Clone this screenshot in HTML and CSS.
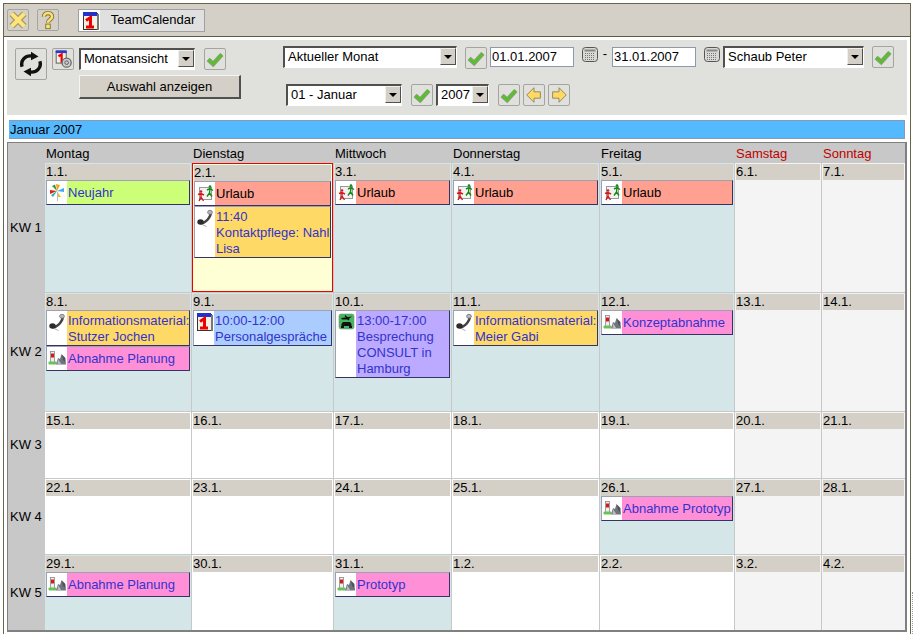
FILE: index.html
```html
<!DOCTYPE html>
<html lang="de">
<head>
<meta charset="utf-8">
<title>TeamCalendar</title>
<link rel="stylesheet" href="styles.css">
</head>
<body>
<svg class="defs" width="0" height="0" aria-hidden="true">
  <symbol id="i-x" viewBox="0 0 22 22">
    <path d="M4 4L18 18M18 4L4 18" fill="none" stroke="#a39a62" stroke-width="7"/>
    <path d="M4 4L18 18M18 4L4 18" fill="none" stroke="#ffe47c" stroke-width="4.600"/>
  </symbol>
  <symbol id="i-q" viewBox="0 0 22 22">
    <path d="M6.500 7.500C6.500 2 15.500 2 15.500 7.500C15.500 10.500 11 10.500 11 14" fill="none" stroke="#7c7444" stroke-width="4.800"/>
    <path d="M6.500 7.500C6.500 2 15.500 2 15.500 7.500C15.500 10.500 11 10.500 11 14" fill="none" stroke="#ffdf70" stroke-width="2.800"/>
    <rect x="8.500" y="15.500" width="5" height="5" fill="#ffdf70" stroke="#7c7444"/>
  </symbol>
  <symbol id="i-cal" viewBox="0 0 20 20">
    <rect x="3.500" y="2.500" width="14" height="16" fill="#f4f0e4" stroke="#333"/>
    <rect x="17" y="3" width="2" height="16" fill="#777"/>
    <rect x="3" y="1" width="14" height="4" fill="#2233cc"/>
    <path d="M6 9.500L10.500 6.500V16.500M6 16H14M10.500 7V16" fill="none" stroke="#ee0000" stroke-width="3"/>
  </symbol>
  <symbol id="i-ref" viewBox="0 0 32 32">
    <path d="M6.500 19C4.500 12 10 6.500 17 7.500" fill="none" stroke="#111" stroke-width="3.600"/>
    <path d="M16 3L24 8L16 12Z" fill="#111"/>
    <path d="M25.500 13C27.500 20 22 25.500 15 24.500" fill="none" stroke="#111" stroke-width="3.600"/>
    <path d="M16 29L8 24L16 20Z" fill="#111"/>
  </symbol>
  <symbol id="i-calc" viewBox="0 0 22 22">
    <rect x="3.500" y="2.500" width="11" height="13" fill="#f4f0e4" stroke="#555"/>
    <rect x="3" y="1.500" width="12" height="3" fill="#2a3acc"/>
    <path d="M6 8L9.500 6V15" fill="none" stroke="#e00" stroke-width="2.400"/>
    <circle cx="15" cy="15" r="5" fill="#ccc" stroke="#666" stroke-width="1.400"/>
    <circle cx="15" cy="15" r="2" fill="none" stroke="#555"/>
  </symbol>
  <symbol id="i-ok" viewBox="0 0 22 22">
    <path d="M3.500 11.500L9 16.500L18.500 6" fill="none" stroke="#8e9a80" stroke-width="5"/>
    <path d="M3.500 11.500L9 16.500L18.500 6" fill="none" stroke="#58c02a" stroke-width="3"/>
  </symbol>
  <symbol id="i-left" viewBox="0 0 22 22">
    <path d="M3 11L11 3V7.500H18V14.500H11V19Z" fill="#ffd964" stroke="#8a8258"/>
  </symbol>
  <symbol id="i-right" viewBox="0 0 22 22">
    <path d="M19 11L11 3V7.500H4V14.500H11V19Z" fill="#ffd964" stroke="#8a8258"/>
  </symbol>
  <symbol id="i-kb" viewBox="0 0 16 16">
    <rect x="0.500" y="0.500" width="15" height="14" rx="3" fill="#d8d8d4" stroke="#555"/>
    <rect x="2.500" y="2.500" width="11" height="2" fill="#888"/>
    <path d="M3 6.500H13M3 8.500H13M3 10.500H13M3 12.500H13" stroke="#777" stroke-dasharray="1 1"/>
  </symbol>
  <symbol id="i-run" viewBox="0 0 20 20">
    <rect x="4.500" y="4.500" width="12" height="12" fill="#f2f2f2" stroke="#999"/>
    <circle cx="6" cy="8.500" r="1.300" fill="#d81818"/>
    <path d="M3 11.500L6 10.500L9 12M6 10.500L6 14L4 18M6 14L8.500 18" fill="none" stroke="#d81818" stroke-width="1.400"/>
    <circle cx="15" cy="3.500" r="1.300" fill="#128a12"/>
    <path d="M12 7L15 5.500L18 7.500M15 5.500L14.500 10L12 13.500M14.500 10L17 13.500" fill="none" stroke="#128a12" stroke-width="1.400"/>
  </symbol>
  <symbol id="i-tel" viewBox="0 0 20 20">
    <path d="M14 4.500C15.500 4.500 16 6 15 8C13.500 11 11.500 13.500 8 15C6.500 15.500 5.500 15 5 14" fill="none" stroke="#444" stroke-width="2.600"/>
    <ellipse cx="15" cy="4.300" rx="2.400" ry="2" fill="#b8b8b8" stroke="#666" stroke-width="0.700"/>
    <ellipse cx="5.500" cy="14" rx="3.200" ry="2.700" fill="#2c2c2c"/>
    <path d="M8 17L11.500 18.500" stroke="#b0b0b0"/>
  </symbol>
  <symbol id="i-star" viewBox="0 0 20 20">
    <path d="M10 9L9 2L13 3Z" fill="#f4a020"/>
    <path d="M10 9L17 6L17 10Z" fill="#44aaee"/>
    <path d="M10 9L14 15L10 15Z" fill="#f0c020"/>
    <path d="M10 9L3 12L3 8Z" fill="#e02020"/>
    <path d="M10 9L5 4L8 2.500Z" fill="#30a030"/>
    <path d="M10 9L6 15L4 13Z" fill="#30b0a0"/>
    <path d="M10.500 10V19" stroke="#bbb"/>
  </symbol>
  <symbol id="i-mile" viewBox="0 0 20 20">
    <rect x="3.500" y="3.500" width="4" height="11" fill="#eee" stroke="#888" stroke-width="0.800"/>
    <rect x="4" y="5.500" width="3" height="4" fill="#d81818"/>
    <rect x="1.500" y="13.500" width="8" height="3" rx="1" fill="#6cc058"/>
    <path d="M9 16.500L11 10L13 11L14.500 6L18.500 10L19 16.500Z" fill="#70747c"/>
    <path d="M11 11L14.500 16.500H10.500Z" fill="#b8bcc2"/>
    <path d="M15 7L16 12L18 14V10Z" fill="#50545c"/>
  </symbol>
  <symbol id="i-trip" viewBox="0 0 20 20">
    <rect x="3" y="2" width="15" height="15" rx="2" fill="#44b860" stroke="#888" stroke-width="0.600"/>
    <path d="M5 6L16 4.500L12 7.500H6Z" fill="#111"/>
    <path d="M9 3.500L13 8" stroke="#111" stroke-width="1.200"/>
    <path d="M5.500 12L7 10H14L15.500 12V14H5.500Z" fill="#111"/>
    <rect x="5" y="14" width="3" height="2" fill="#111"/>
    <rect x="13" y="14" width="3" height="2" fill="#111"/>
  </symbol>
</svg>

<div class="frame">
  <header class="toolbar">
    <span class="ibtn"><svg class="ic22"><use href="#i-x"/></svg></span>
    <span class="ibtn"><svg class="ic22"><use href="#i-q"/></svg></span>
    <div class="tab">
      <span class="tab-icon"><svg class="ic20"><use href="#i-cal"/></svg></span>
      <span class="tab-label">TeamCalendar</span>
    </div>
  </header>

  <section class="panel">
    <div class="group-left">
      <span class="ibtn big"><svg class="ic32"><use href="#i-ref"/></svg></span>
      <span class="ibtn"><svg class="ic22"><use href="#i-calc"/></svg></span>
      <div class="view-col">
        <div class="view-row">
          <div class="sel w-view"><span class="sel-text">Monatsansicht</span><span class="sel-arrow"></span></div>
          <span class="ibtn"><svg class="ic22"><use href="#i-ok"/></svg></span>
        </div>
        <button class="show-btn" type="button">Auswahl anzeigen</button>
      </div>
    </div>
    <div class="group-right">
      <div class="range-row">
        <div class="sel w-range"><span class="sel-text">Aktueller Monat</span><span class="sel-arrow"></span></div>
        <span class="ibtn ok-range"><svg class="ic22"><use href="#i-ok"/></svg></span>
        <span class="date-input">01.01.2007</span>
        <svg class="kb"><use href="#i-kb"/></svg>
        <span class="dash">-</span>
        <span class="date-input">31.01.2007</span>
        <svg class="kb"><use href="#i-kb"/></svg>
        <div class="sel w-person"><span class="sel-text">Schaub Peter</span><span class="sel-arrow"></span></div>
        <span class="ibtn ok-person"><svg class="ic22"><use href="#i-ok"/></svg></span>
      </div>
      <div class="month-row">
        <div class="sel w-month"><span class="sel-text">01 - Januar</span><span class="sel-arrow"></span></div>
        <span class="ibtn ok-month"><svg class="ic22"><use href="#i-ok"/></svg></span>
        <div class="sel w-year"><span class="sel-text">2007</span><span class="sel-arrow"></span></div>
        <span class="ibtn ok-year"><svg class="ic22"><use href="#i-ok"/></svg></span>
        <span class="ibtn"><svg class="ic22"><use href="#i-left"/></svg></span>
        <span class="ibtn"><svg class="ic22"><use href="#i-right"/></svg></span>
      </div>
    </div>
  </section>

  <div class="month-title">Januar 2007</div>

  <main class="cal">
    <div class="head"></div>
    <div class="head">Montag</div>
    <div class="head">Dienstag</div>
    <div class="head">Mittwoch</div>
    <div class="head">Donnerstag</div>
    <div class="head">Freitag</div>
    <div class="head red">Samstag</div>
    <div class="head red">Sonntag</div>

    <div class="kw">KW 1</div>
    <div class="cell busy"><div class="date">1.1.</div>
      <div class="ev green"><span class="ev-icon"><svg class="ic20"><use href="#i-star"/></svg></span><span class="ev-text">Neujahr</span></div></div>
    <div class="cell today"><div class="date">2.1.</div>
      <div class="ev salmon"><span class="ev-icon"><svg class="ic20"><use href="#i-run"/></svg></span><span class="ev-text">Urlaub</span></div>
      <div class="ev yellow multi"><span class="ev-icon"><svg class="ic20"><use href="#i-tel"/></svg></span><span class="ev-text">11:40<br>Kontaktpflege: Nahl Lisa</span></div></div>
    <div class="cell busy"><div class="date">3.1.</div>
      <div class="ev salmon"><span class="ev-icon"><svg class="ic20"><use href="#i-run"/></svg></span><span class="ev-text">Urlaub</span></div></div>
    <div class="cell busy"><div class="date">4.1.</div>
      <div class="ev salmon"><span class="ev-icon"><svg class="ic20"><use href="#i-run"/></svg></span><span class="ev-text">Urlaub</span></div></div>
    <div class="cell busy"><div class="date">5.1.</div>
      <div class="ev salmon"><span class="ev-icon"><svg class="ic20"><use href="#i-run"/></svg></span><span class="ev-text">Urlaub</span></div></div>
    <div class="cell off"><div class="date">6.1.</div></div>
    <div class="cell off"><div class="date">7.1.</div></div>

    <div class="kw">KW 2</div>
    <div class="cell busy"><div class="date">8.1.</div>
      <div class="ev yellow multi"><span class="ev-icon"><svg class="ic20"><use href="#i-tel"/></svg></span><span class="ev-text">Informationsmaterial: Stutzer Jochen</span></div>
      <div class="ev pink"><span class="ev-icon"><svg class="ic20"><use href="#i-mile"/></svg></span><span class="ev-text">Abnahme Planung</span></div></div>
    <div class="cell busy"><div class="date">9.1.</div>
      <div class="ev blue multi"><span class="ev-icon"><svg class="ic20"><use href="#i-cal"/></svg></span><span class="ev-text">10:00-12:00<br>Personalgespräche</span></div></div>
    <div class="cell busy"><div class="date">10.1.</div>
      <div class="ev violet multi"><span class="ev-icon"><svg class="ic20"><use href="#i-trip"/></svg></span><span class="ev-text">13:00-17:00<br>Besprechung CONSULT in Hamburg</span></div></div>
    <div class="cell busy"><div class="date">11.1.</div>
      <div class="ev yellow multi"><span class="ev-icon"><svg class="ic20"><use href="#i-tel"/></svg></span><span class="ev-text">Informationsmaterial: Meier Gabi</span></div></div>
    <div class="cell busy"><div class="date">12.1.</div>
      <div class="ev pink"><span class="ev-icon"><svg class="ic20"><use href="#i-mile"/></svg></span><span class="ev-text">Konzeptabnahme</span></div></div>
    <div class="cell off"><div class="date">13.1.</div></div>
    <div class="cell off"><div class="date">14.1.</div></div>

    <div class="kw">KW 3</div>
    <div class="cell"><div class="date">15.1.</div></div>
    <div class="cell"><div class="date">16.1.</div></div>
    <div class="cell"><div class="date">17.1.</div></div>
    <div class="cell"><div class="date">18.1.</div></div>
    <div class="cell"><div class="date">19.1.</div></div>
    <div class="cell off"><div class="date">20.1.</div></div>
    <div class="cell off"><div class="date">21.1.</div></div>

    <div class="kw">KW 4</div>
    <div class="cell"><div class="date">22.1.</div></div>
    <div class="cell"><div class="date">23.1.</div></div>
    <div class="cell"><div class="date">24.1.</div></div>
    <div class="cell"><div class="date">25.1.</div></div>
    <div class="cell busy"><div class="date">26.1.</div>
      <div class="ev pink"><span class="ev-icon"><svg class="ic20"><use href="#i-mile"/></svg></span><span class="ev-text">Abnahme Prototyp</span></div></div>
    <div class="cell off"><div class="date">27.1.</div></div>
    <div class="cell off"><div class="date">28.1.</div></div>

    <div class="kw">KW 5</div>
    <div class="cell busy"><div class="date">29.1.</div>
      <div class="ev pink"><span class="ev-icon"><svg class="ic20"><use href="#i-mile"/></svg></span><span class="ev-text">Abnahme Planung</span></div></div>
    <div class="cell"><div class="date">30.1.</div></div>
    <div class="cell busy"><div class="date">31.1.</div>
      <div class="ev pink"><span class="ev-icon"><svg class="ic20"><use href="#i-mile"/></svg></span><span class="ev-text">Prototyp</span></div></div>
    <div class="cell"><div class="date">1.2.</div></div>
    <div class="cell"><div class="date">2.2.</div></div>
    <div class="cell off"><div class="date">3.2.</div></div>
    <div class="cell off"><div class="date">4.2.</div></div>
  </main>
</div>
<div class="edge"></div>
</body>
</html>
```

FILE: styles.css
```css
* { box-sizing: border-box; }
html, body { margin: 0; padding: 0; background: #fff; overflow: hidden; }
body { position: relative; width: 914px; height: 634px; font: 13px/16px "Liberation Sans", Arial, sans-serif; color: #000; }
.defs { position: absolute; }
svg { display: block; }
.ic20 { width: 20px; height: 20px; }
.ic22 { width: 20px; height: 20px; }
.ic32 { width: 30px; height: 30px; }
.kb { width: 16px; height: 16px; flex: none; }
.edge { position: absolute; left: 912px; top: 592px; width: 1px; height: 42px; border-left: 1px dotted #999; }

.frame {
  margin: 3px 0 0 3px;
  width: 908px;
  height: 640px;
  border: 1px solid #66664a;
  border-bottom: 0;
}

.toolbar {
  height: 33px;
  display: flex;
  align-items: flex-start;
  gap: 8px;
  padding: 5px 0 0 3px;
  background: #d4d0c8;
  border-bottom: 1px solid #5c5c40;
}
.ibtn {
  flex: none;
  width: 22px;
  height: 22px;
  display: flex;
  align-items: center;
  justify-content: center;
  border: 1px solid #a4a4a0;
  border-radius: 2px;
}
.ibtn.big { width: 32px; height: 32px; }
.tab {
  display: flex;
  height: 23px;
  margin-left: 11px;
  border: 1px solid #a0a0a0;
}
.tab-icon { width: 21px; background: #fff; display: flex; align-items: center; justify-content: center; }
.tab-label { width: 104px; background: #e0e0e0; text-align: center; line-height: 20px; padding-left: 2px; }

.panel {
  display: flex;
  margin: 3px 0 0 3px;
  width: 900px;
  height: 75px;
  background: #e0e0dc;
  padding: 6px 0 0 8px;
}
.group-left { display: flex; gap: 5px; width: 268px; flex: none; padding-top: 2px; align-items: flex-start; }
.view-col { display: flex; flex-direction: column; gap: 5px; }
.view-row { display: flex; gap: 9px; align-items: flex-start; }
.show-btn {
  width: 162px;
  height: 24px;
  padding: 0;
  margin: 0;
  font: inherit;
  color: #000;
  background: #d4d0c8;
  border: 1px solid;
  border-color: #f4f4f0 #505050 #505050 #f4f4f0;
  border-width: 1px 2px 2px 1px;
}

.sel {
  display: flex;
  flex: none;
  height: 22px;
  background: #fff;
  border: 1px solid;
  border-width: 2px 1px 1px 2px;
  border-color: #505050 #fff #fff #505050;
  align-items: stretch;
}
.sel-text { flex: 1; padding-left: 3px; line-height: 18px; white-space: nowrap; overflow: hidden; }
.sel-arrow {
  position: relative;
  flex: none;
  width: 16px;
  height: 17px;
  background: #d4d0c8;
  border: 1px solid;
  border-color: #f0f0ec #505050 #505050 #f0f0ec;
  margin-bottom: 1px;
}
.sel-arrow::after {
  content: "";
  position: absolute;
  left: 3px;
  top: 6px;
  border: 4px solid transparent;
  border-top-color: #000;
  border-bottom: 0;
}
.w-view { width: 116px; }
.w-range { width: 174px; }
.w-person { width: 141px; margin-left: 3px; }
.w-month { width: 116px; }
.w-year { width: 53px; }

.group-right { display: flex; flex-direction: column; gap: 16px; }
.range-row { display: flex; align-items: flex-start; height: 22px; }
.month-row { display: flex; align-items: flex-start; padding-left: 3px; gap: 3px; }
.ok-range { margin: 1px 3px 0 8px; }
.ok-person { margin-left: 8px; }
.ok-month { margin-left: 6px; }
.ok-year { margin-left: 6px; }
.date-input {
  flex: none;
  width: 84px;
  height: 20px;
  margin-top: 1px;
  background: #fff;
  border: 1px solid #8a9aaa;
  padding-left: 1px;
  line-height: 18px;
}
.range-row .kb { margin: 1px 0 0 8px; }
.dash { flex: none; width: 14px; text-align: center; }

.month-title {
  margin: 5px 0 0 5px;
  width: 896px;
  height: 19px;
  background: #55b9ff;
  border: 1px solid #8a9ab0;
  border-width: 1px 1px 1px 0;
  padding-left: 1px;
  line-height: 18px;
}

.cal {
  margin: 3px 0 0 3px;
  width: 900px;
  display: grid;
  grid-template-columns: 36px 146px 141px 117px 147px 134px 86px 83px;
  grid-template-rows: 19px 129px 118px 66px 75px 75px;
  gap: 1px;
  background: #c8c8c8;
  border: 1px solid #808080;
  border-width: 1px 2px 2px 1px;
}
.head { padding: 3px 0 0 1px; white-space: nowrap; }
.head.red { color: #c00000; }
.kw { display: flex; align-items: center; padding-left: 2px; white-space: nowrap; }
.cell { background: #fff; padding: 1px; min-width: 0; }
.cell.busy { background: #d5e6e9; }
.cell.off { background: #f4f4f4; }
.cell.today { background: #ffffd5; border: 1px solid #ee0000; }
.date { background: #d4d0c8; height: 16px; line-height: 16px; }

.ev {
  display: flex;
  min-height: 25px;
  border: 1px solid;
  border-color: #a0a0b4 #333366 #333366 #a0a0b4;
  color: #3333cc;
}
.ev-icon { flex: none; width: 20px; background: #fff; padding-top: 1px; }
.ev-text { flex: 1; min-width: 0; padding: 1px 0 1px 1px; margin: auto 0; }
.ev.multi .ev-text { padding: 2px 0 0 1px; }
.green { background: #ccff77; }
.salmon { background: #ffa090; color: #000; }
.yellow { background: #ffd966; }
.pink { background: #ff90d8; }
.blue { background: #aaccff; }
.violet { background: #bbaaff; }
```
